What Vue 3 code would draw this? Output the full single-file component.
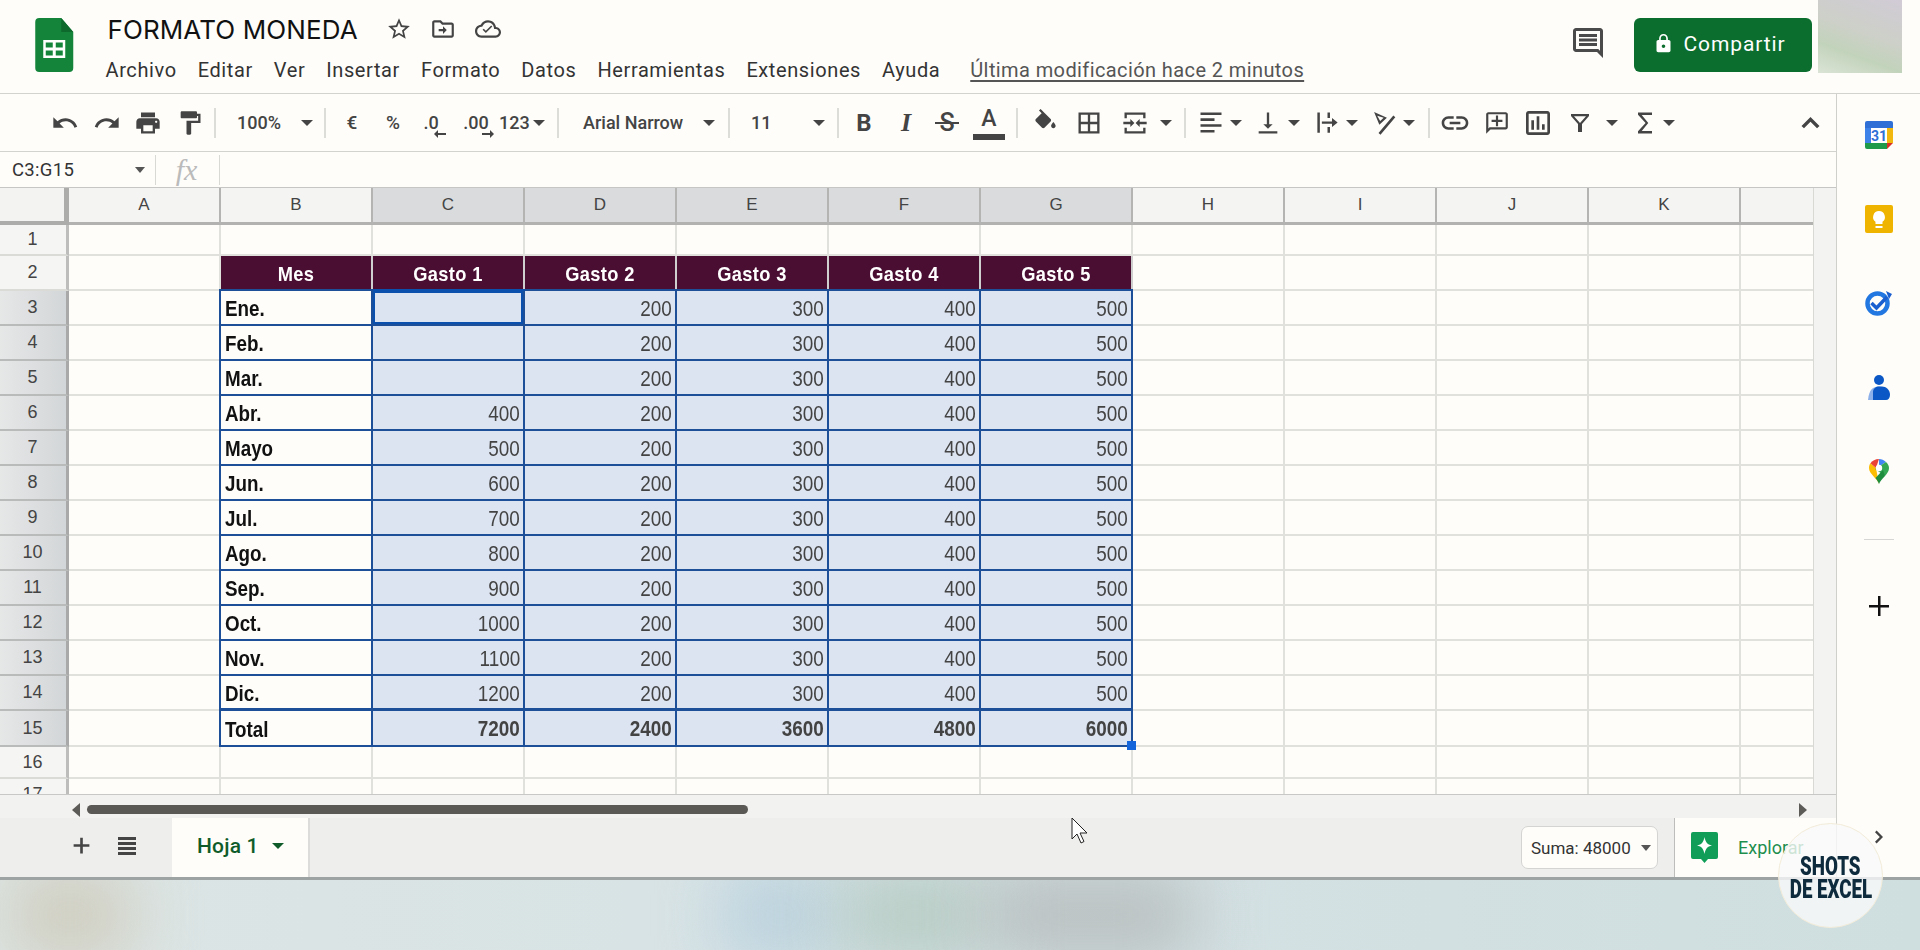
<script setup>
const P = {
  undo: 'M12.5 8c-2.65 0-5.05.99-6.9 2.6L2 7v9h9l-3.62-3.62c1.39-1.16 3.16-1.88 5.12-1.88 3.54 0 6.55 2.31 7.6 5.5l2.37-.78C21.08 11.03 17.15 8 12.5 8z',
  redo: 'M18.4 10.6C16.55 8.99 14.15 8 11.5 8c-4.65 0-8.58 3.03-9.96 7.22L3.9 16c1.05-3.19 4.05-5.5 7.6-5.5 1.95 0 3.73.72 5.12 1.88L13 16h9V7l-3.6 3.6z',
  print: 'M19 8H5c-1.66 0-3 1.34-3 3v6h4v4h12v-4h4v-6c0-1.66-1.34-3-3-3zm-3 11H8v-5h8v5zm3-7c-.55 0-1-.45-1-1s.45-1 1-1 1 .45 1 1-.45 1-1 1zm-1-9H6v4h12V3z',
  paint: 'M18 4V3c0-.55-.45-1-1-1H5c-.55 0-1 .45-1 1v4c0 .55.45 1 1 1h12c.55 0 1-.45 1-1V6h1v4H9v11c0 .55.45 1 1 1h2c.55 0 1-.45 1-1v-9h8V4h-3z',
  fill: 'M16.56 8.94L7.62 0 6.21 1.41l2.38 2.38-5.15 5.15c-.59.59-.59 1.54 0 2.12l5.5 5.5c.29.29.68.44 1.06.44s.77-.15 1.06-.44l5.5-5.5c.59-.58.59-1.53 0-2.12zM19 11.5s-2 2.17-2 3.5c0 1.1.9 2 2 2s2-.9 2-2c0-1.33-2-3.5-2-3.5z',
  borders: 'M3 3v18h18V3H3zm8 16H5v-6h6v6zm0-8H5V5h6v6zm8 8h-6v-6h6v6zm0-8h-6V5h6v6z',
  merge: 'M3 3h18v5h-2V5H5v3H3zM3 16h2v3h14v-3h2v5H3zM2 11h6V8.5l3.5 3.5L8 15.500V13H2zM22 13h-6v2.500L12.500 12 16 8.500V11h6z',
  align: 'M3 3h18v2.200H3zM3 8h12v2.200H3zM3 13h18v2.200H3zM3 18h12v2.200H3z',
  valign: 'M16 13h-3V3h-2v10H8l4 4 4-4zM4 19v2h16v-2H4z',
  wrap: 'M3 3h2.200v18H3zM12 3h2.200v5H12zM12 16h2.200v5H12zM7 11h9V8l5 4-5 4v-3H7z',
  rotate: 'M3.500 2.500l11 5-6.500 6zM6.200 5.800l2.500 4.400 3-2.800zM20 5.500l1.700 1.500L9 22l-1.700-1.500z',
  link: 'M3.900 12c0-1.710 1.390-3.100 3.100-3.100h4V7H7c-2.760 0-5 2.240-5 5s2.240 5 5 5h4v-1.900H7c-1.710 0-3.100-1.390-3.100-3.100zM8 13h8v-2H8v2zm9-6h-4v1.900h4c1.710 0 3.100 1.390 3.100 3.100s-1.390 3.100-3.100 3.100h-4V17h4c2.760 0 5-2.240 5-5s-2.240-5-5-5z',
  comment: 'M20 2H4c-1.100 0-2 .9-2 2v18l4-4h14c1.100 0 2-.9 2-2V4c0-1.100-.9-2-2-2zm0 14H5.170L4 17.170V4h16v12zM13 5h-2v4H7v2h4v4h2v-4h4V9h-4z',
  chart: 'M9 17H7v-7h2v7zm4 0h-2V7h2v10zm4 0h-2v-4h2v4zm2 2H5V5h14v14zm0-16H5c-1.100 0-2 .9-2 2v14c0 1.100.9 2 2 2h14c1.100 0 2-.9 2-2V5c0-1.100-.9-2-2-2z',
  filter: 'M3 3h18v2l-7 8v8h-4v-8L3 5zM6 5.200h12l-6 6.800z',
  sigma: 'M18 3H6v2l6.500 7L6 19v2h12v-2.200H9.200l5.600-6.800-5.600-6.800H18z',
  up: 'M12 7l-8 8 2.200 2.200L12 11.400l5.800 5.800L20 15z'
}
const tool = (kind, x, w, extra = {}) => ({ kind, x, w, ...extra })
const icon = (name, cx, size = 28) => tool('icon', cx - size / 2, size, { d: P[name], size })
const caret = (cx) => tool('caret', cx - 6, 12)
const sep = (cx) => tool('sep', cx - 1, 2)
const text = (label, x, w, cls = '') => tool('text', x, w, { label, cls })

const raw = [
  icon('undo', 65), icon('redo', 107), icon('print', 148), icon('paint', 190), sep(215),
  text('100%', 237, 46), caret(307), sep(325),
  text('€', 342, 20, 'c'), text('%', 383, 20, 'c'),
  tool('dec', 420, 22, { label: '.0', dir: 'l' }), tool('dec', 461, 30, { label: '.00', dir: 'r' }),
  text('123', 499, 33), caret(539), sep(558),
  text('Arial Narrow', 583, 104), caret(709), sep(729),
  text('11', 751, 22), caret(819), sep(838),
  tool('letter', 854, 20, { label: 'B', cls: 'b' }),
  tool('letter', 896, 20, { label: 'I', cls: 'i' }),
  tool('letter', 935, 24, { label: 'S', cls: 's' }),
  tool('color', 973, 32), sep(1017),
  icon('fill', 1045, 27), icon('borders', 1089, 28), icon('merge', 1135, 28), caret(1166), sep(1185),
  icon('align', 1211, 28), caret(1236), icon('valign', 1268, 28), caret(1294),
  icon('wrap', 1327, 27), caret(1352), icon('rotate', 1384, 28), caret(1409), sep(1429),
  icon('link', 1455, 32), icon('comment', 1497, 26), icon('chart', 1538, 32),
  icon('filter', 1580, 24), caret(1612), icon('sigma', 1645, 28), caret(1669), icon('up', 1810, 27)
]
let end = 0
const tools = raw.map((t) => {
  const m = t.x - end
  end = t.x + t.w
  return { ...t, style: { marginLeft: m + 'px', width: t.w + 'px' } }
})

const menu = ['Archivo', 'Editar', 'Ver', 'Insertar', 'Formato', 'Datos', 'Herramientas', 'Extensiones', 'Ayuda']
const cols = ['A', 'B', 'C', 'D', 'E', 'F', 'G', 'H', 'I', 'J', 'K', '']
const months = ['Ene.', 'Feb.', 'Mar.', 'Abr.', 'Mayo', 'Jun.', 'Jul.', 'Ago.', 'Sep.', 'Oct.', 'Nov.', 'Dic.']
const gasto1 = ['', '', '', 400, 500, 600, 700, 800, 900, 1000, 1100, 1200]
const heads = ['Mes', 'Gasto 1', 'Gasto 2', 'Gasto 3', 'Gasto 4', 'Gasto 5']

const blank = () => Array(12).fill(null).map(() => ({ t: '', c: '' }))
const rows = []
for (let n = 1; n <= 17; n++) {
  const cells = blank()
  let h = 35
  if (n === 1) h = 31
  if (n === 15) h = 36
  if (n === 16) h = 32
  if (n === 17) h = 15
  if (n === 2) heads.forEach((t, i) => { cells[i + 1] = { t, c: 'hd' } })
  if (n >= 3 && n <= 14) {
    const i = n - 3
    cells[1] = { t: months[i], c: 'box month' }
    const vals = [gasto1[i], 200, 300, 400, 500]
    vals.forEach((t, k) => { cells[k + 2] = { t, c: 'box sel num' } })
  }
  if (n === 15) {
    cells[1] = { t: 'Total', c: 'box month tot' }
    ;[7200, 2400, 3600, 4800, 6000].forEach((t, k) => { cells[k + 2] = { t, c: 'box sel num tot' } })
  }
  if (n === 3) cells[2].c += ' active'
  if (n === 15) cells[6].c += ' handle'
  rows.push({ n, h, cells, on: n >= 3 && n <= 15 })
}
</script>

<template>
  <div class="page">
    <header class="top">
      <svg class="logo" viewBox="0 0 38 54">
        <path d="M4 0h22l12 14v36a4 4 0 0 1-4 4H4a4 4 0 0 1-4-4V4a4 4 0 0 1 4-4z" fill="#13843a" />
        <path d="M26 0l12 14H26z" fill="#0d6a2c" />
        <path d="M8 22h22v18H8zM10.500 24.500v5h7v-5zm10 0v5h7v-5zm-10 8v5h7v-5zm10 0v5h7v-5z" fill="#fff" fill-rule="evenodd" />
      </svg>
      <div class="doc">
        <div class="title-row">
          <span class="title">FORMATO MONEDA</span>
          <svg class="ti star" viewBox="0 0 24 24"><path d="M22 9.240l-7.190-.62L12 2 9.190 8.630 2 9.240l5.460 4.730L5.820 21 12 17.270 18.180 21l-1.630-7.030L22 9.240zM12 15.400l-3.760 2.270 1-4.280-3.320-2.880 4.380-.38L12 6.100l1.710 4.040 4.380.38-3.320 2.880 1 4.280L12 15.400z" /></svg>
          <svg class="ti folder" viewBox="0 0 24 24"><path d="M20 6h-8l-2-2H4c-1.100 0-2 .9-2 2v12c0 1.100.9 2 2 2h16c1.100 0 2-.9 2-2V8c0-1.100-.9-2-2-2zm0 12H4V6h5.170l2 2H20v10zM12 9.500V12H8v2h4v2.500l3.500-3.500z" /></svg>
          <svg class="ti cloud" viewBox="0 0 24 24"><path d="M19.350 10.040C18.670 6.590 15.640 4 12 4 9.110 4 6.600 5.640 5.350 8.040 2.340 8.360 0 10.910 0 14c0 3.310 2.690 6 6 6h13c2.760 0 5-2.240 5-5 0-2.640-2.050-4.780-4.650-4.960zM19 18H6c-2.210 0-4-1.790-4-4 0-2.050 1.530-3.760 3.560-3.970l1.070-.11.5-.95C8.080 7.140 9.940 6 12 6c2.620 0 4.880 1.860 5.390 4.430l.3 1.500 1.530.11c1.560.1 2.780 1.410 2.780 2.960 0 1.650-1.350 3-3 3zm-9-2.200l-3-3 1.100-1.100 1.900 1.900 4.900-4.900 1.100 1.100z" /></svg>
        </div>
        <nav class="menu">
          <span v-for="m in menu" :key="m">{{ m }}</span>
          <a class="modified">Última modificación hace 2 minutos</a>
        </nav>
      </div>
      <svg class="chat" viewBox="0 0 24 24"><path d="M20 2H4c-1.100 0-2 .9-2 2v12c0 1.100.9 2 2 2h14l4 4V4c0-1.100-.9-2-2-2zm0 15.170L18.830 16H4V4h16v13.170zM6 12h12v2H6zm0-3h12v2H6zm0-3h12v2H6z" /></svg>
      <button class="share">
        <svg viewBox="0 0 24 24"><path d="M18 8h-1V6c0-2.760-2.240-5-5-5S7 3.240 7 6v2H6c-1.100 0-2 .9-2 2v10c0 1.100.9 2 2 2h12c1.100 0 2-.9 2-2V10c0-1.100-.9-2-2-2zm-6 9c-1.100 0-2-.9-2-2s.9-2 2-2 2 .9 2 2-.9 2-2 2zm3.100-9H8.900V6c0-1.710 1.390-3.100 3.100-3.100 1.710 0 3.100 1.390 3.100 3.100v2z" /></svg>
        Compartir
      </button>
      <div class="avatar"></div>
    </header>

    <div class="work">
      <section class="sheet">
        <div class="toolbar">
          <span v-for="(t, i) in tools" :key="i" class="tool" :class="t.kind" :style="t.style">
            <svg v-if="t.kind === 'icon'" :width="t.size" :height="t.size" viewBox="0 0 24 24"><path :d="t.d" fill-rule="evenodd" /></svg>
            <span v-else-if="t.kind === 'text'" :class="t.cls">{{ t.label }}</span>
            <span v-else-if="t.kind === 'letter'" :class="t.cls">{{ t.label }}</span>
            <span v-else-if="t.kind === 'color'" class="color-a">A</span>
            <template v-else-if="t.kind === 'dec'">
              {{ t.label }}
              <svg class="dec-arrow" :class="t.dir" viewBox="0 0 12 8"><path d="M0 3h8V0l4 4-4 4V5H0z" /></svg>
            </template>
          </span>
        </div>

        <div class="formula">
          <span class="ref">C3:G15</span>
          <i class="mini-caret"></i>
          <b class="fsep"></b>
          <span class="fx">fx</span>
          <b class="fsep"></b>
        </div>

        <div class="grid-wrap">
          <div class="grid">
            <div class="line header-line">
              <div class="rh corner"></div>
              <div v-for="(c, i) in cols" :key="i" class="ch" :class="{ on: i >= 2 && i <= 6 }">{{ c }}</div>
            </div>
            <div v-for="r in rows" :key="r.n" class="line" :class="{ 'r15': r.n === 15, 'r3': r.n === 3, 'r17': r.n === 17 }" :style="{ height: r.h + 'px' }">
              <div class="rh" :class="{ on: r.on }">{{ r.n }}</div>
              <div v-for="(c, i) in r.cells" :key="i" class="cell" :class="c.c"><span v-if="c.t !== ''" class="tx">{{ c.t }}</span></div>
            </div>
          </div>
          <div class="vtrack"></div>
        </div>

        <div class="hscroll">
          <div class="hs-left">
            <svg class="arrow" viewBox="0 0 8 14"><path d="M8 0v14L0 7z" /></svg>
            <div class="thumb"></div>
          </div>
          <svg class="arrow right" viewBox="0 0 8 14"><path d="M0 0v14l8-7z" /></svg>
          <div class="hs-end"></div>
        </div>

        <div class="tabs">
          <svg class="plus" viewBox="0 0 24 24"><path d="M10.500 3h3v7.500H21v3h-7.500V21h-3v-7.500H3v-3h7.500z" /></svg>
          <svg class="list" viewBox="0 0 24 24"><path d="M3 3h18v3H3zM3 8h18v3H3zM3 13h18v3H3zM3 18h18v3H3z" /></svg>
          <div class="tab">Hoja 1<i class="tab-caret"></i></div>
          <div class="suma">Suma: 48000<i class="mini-caret"></i></div>
          <div class="explore">
            <svg viewBox="0 0 27 31"><path d="M2 0h23a2 2 0 0 1 2 2v23a2 2 0 0 1-2 2h-8l-3.500 4-3.500-4H2a2 2 0 0 1-2-2V2a2 2 0 0 1 2-2z" fill="#0f9d58" /><path d="M13.500 5c1 5 2.500 7.500 7.500 8.500-5 1-6.500 3.500-7.500 8.500-1-5-2.500-7.500-7.500-8.500 5-1 6.500-3.500 7.500-8.500z" fill="#fff" /></svg>
            <span>Explorar</span>
          </div>
        </div>
      </section>

      <aside class="side">
        <div class="slot first">
          <svg width="28" height="28" viewBox="0 0 28 28">
            <path d="M2 0h24a2 2 0 0 1 2 2v5H0V2a2 2 0 0 1 2-2z" fill="#2f6fd6" />
            <path d="M0 7h6v15H0z" fill="#3d82e8" /><path d="M22 7h6v15h-6z" fill="#f2b80f" />
            <path d="M0 22h22v6H2a2 2 0 0 1-2-2z" fill="#1e9a4a" /><path d="M22 22h6l-6 6z" fill="#d93025" />
            <path d="M6 7h16v15H6z" fill="#fff" />
            <text x="14" y="20" text-anchor="middle" class="cal">31</text>
          </svg>
        </div>
        <div class="slot">
          <svg width="28" height="28" viewBox="0 0 28 28">
            <rect width="28" height="28" rx="2" fill="#efb400" />
            <path d="M14 6a6 6 0 0 1 3.500 10.800V19h-7v-2.200A6 6 0 0 1 14 6z" fill="#fff" /><path d="M10.500 21h7v2h-7z" fill="#fff" />
          </svg>
        </div>
        <div class="slot">
          <svg width="28" height="26" viewBox="0 0 28 26">
            <circle cx="12.500" cy="13.500" r="10" fill="none" stroke="#2277e0" stroke-width="4.500" />
            <path d="M6.500 13l5 5L22 7" fill="none" stroke="#1a5fd0" stroke-width="3.500" />
            <path d="M21 1l6 3-3 5z" fill="#1a5fd0" />
          </svg>
        </div>
        <div class="slot">
          <svg width="22" height="25" viewBox="0 0 22 25">
            <circle cx="11" cy="5" r="5" fill="#0b57c5" />
            <path d="M11 11.500c-6 0-10 3-11 13.500h14V12z" fill="#8cb0ea" />
            <path d="M5 25v-8c0-3.500 3-5.500 6-5.500h3c4 0 8 3 8 8.500 0 3-2 5-4 5z" fill="#0b57c5" />
          </svg>
        </div>
        <div class="slot">
          <svg width="20" height="25" viewBox="0 0 20 25">
            <path d="M10 25C8 19 0 15 0 9c0-1.800.5-3.400 1.400-4.700L7 9z" fill="#fbbc04" />
            <path d="M1.400 4.300C3.200 1.700 6.400 0 10 0l-3 9z" fill="#ea4335" />
            <path d="M10 0c2.500 0 5 1 7 3L7 9.500C7 8 8 6.500 10 6.500z" fill="#4285f4" />
            <path d="M17 3c2 2 3 4 3 6 0 3-1.600 5.300-4 8L6 10z" fill="#34a853" />
            <path d="M16 17c-2.500 2.800-5 5-6 8-.7-2.200-2-4-3.500-6L14 11z" fill="#1e8e3e" />
            <circle cx="10" cy="9" r="3.200" fill="#fff" />
          </svg>
        </div>
        <div class="side-line"></div>
        <svg class="side-plus" viewBox="0 0 20 20"><path d="M9 0h2.500v9H20v2.500h-8.500V20H9v-8.500H0V9h9z" /></svg>
        <svg class="side-chev" viewBox="0 0 10 16"><path d="M2 0l8 8-8 8-2-2 6-6-6-6z" /></svg>
      </aside>
    </div>

    <footer class="strip">
      <i class="blob b1"></i><i class="blob b2"></i><i class="blob b3"></i><i class="blob b4"></i>
    </footer>

    <svg class="pointer" viewBox="0 0 18 27"><path d="M1 1v21l5-5 4 9 3-1.500-4-8.500h7z" fill="#fff" stroke="#222" stroke-width="1" /></svg>
    <div class="badge"><span>SHOTS</span><span>DE EXCEL</span></div>
  </div>
</template>

<style>
html, body { margin: 0; background: #fefdfa; }
</style>

<style scoped>
.page { position: relative; width: 1920px; height: 950px; overflow: hidden; display: flex; flex-direction: column; background: #fefdfa; font-family: Roboto, sans-serif; color: #444; }

.top { height: 93px; flex: none; display: flex; align-items: flex-start; border-bottom: 1px solid #d2d2ce; box-sizing: content-box; }
.logo { width: 38.500px; height: 54px; margin: 18px 0 0 35px; flex: none; }
.doc { margin-left: 34px; width: 1462.500px; flex: none; }
.title-row { display: flex; align-items: center; height: 30px; margin-top: 14px; }
.title { font: 400 26px Inter, Roboto, sans-serif; color: #111; width: 278px; letter-spacing: 0.1px; white-space: nowrap; }
.ti { fill: #444; flex: none; }
.star { width: 26px; height: 26px; }
.folder { width: 26px; height: 26px; margin-left: 18px; }
.cloud { width: 26px; height: 26px; margin-left: 19px; }
.menu { display: flex; gap: 21px; align-items: center; height: 26px; margin-top: 13px; font-size: 20px; letter-spacing: 0.6px; color: #333; margin-left: -2px; white-space: nowrap; }
.modified { margin-left: 9px; color: #555; letter-spacing: 0.4px; text-decoration: underline; text-underline-offset: 3px; }
.chat { width: 36px; height: 36px; fill: #4a4a4a; margin: 25px 0 0 0; flex: none; }
.share { width: 178px; height: 54px; margin: 18px 0 0 28px; flex: none; background: #0b6e2e; color: #fff; border: 0; border-radius: 6px; font: 400 21px Roboto, sans-serif; letter-spacing: 0.9px; display: flex; align-items: center; justify-content: center; gap: 9px; padding: 0 7px 3px 0; }
.share svg { width: 21px; height: 21px; fill: #fff; }
.avatar { width: 84px; height: 73px; margin-left: 6px; flex: none; background: linear-gradient(200deg, #d1cbd6 0%, #cdd0c8 45%, #c2d3bb 70%, #dbe4d6 100%); }

.work { flex: none; height: 786px; display: flex; border-bottom: 3px solid #9da2a3; box-sizing: border-box; }
.sheet { width: 1837px; flex: none; border-right: 1px solid #cfcfcb; box-sizing: border-box; display: flex; flex-direction: column; }

.toolbar { height: 57px; flex: none; border-bottom: 1px solid #d2d2ce; display: flex; align-items: center; font-size: 18px; font-weight: 500; color: #444; box-sizing: content-box; }
.tool { display: inline-flex; align-items: center; justify-content: center; flex: none; position: relative; white-space: nowrap; }
.tool.text { justify-content: flex-start; }
.tool .c { width: 100%; text-align: center; font-size: 19px; }
.tool svg { fill: #444; }
.tool.caret { height: 6px; width: 12px; }
.tool.caret::before { content: ''; border: 6px solid transparent; border-top: 6px solid #444; border-bottom: 0; }
.tool.sep { height: 30px; background: #dcdcd8; }
.tool.dec { height: 34px; font-size: 18px; }
.dec-arrow { position: absolute; width: 12px; height: 8px; bottom: 2px; }
.dec-arrow.l { right: -4px; transform: scaleX(-1); }
.dec-arrow.r { right: -3px; }
.b { font-size: 24px; font-weight: 700; }
.i { font: italic 700 26px "Liberation Serif", serif; }
.s { font-size: 25px; font-weight: 500; position: relative; }
.s::after { content: ''; position: absolute; left: -4px; right: -4px; top: 14px; height: 2px; background: #444; }
.tool.color { height: 29px; align-items: flex-start; border-bottom: 6px solid #444; box-sizing: content-box; }
.color-a { font-size: 23px; line-height: 28px; }

.formula { height: 35px; flex: none; border-bottom: 1px solid #c6c6c4; display: flex; align-items: center; box-sizing: content-box; }
.ref { font-size: 18.500px; letter-spacing: 0.3px; color: #333; margin-left: 12px; width: 123px; flex: none; }
.mini-caret { border: 5px solid transparent; border-top: 6px solid #555; border-bottom: 0; flex: none; }
.fsep { width: 1px; height: 30px; background: #d8d8d4; flex: none; margin-left: 10px; }
.fx { font: italic 30px "Liberation Serif", serif; color: #bbb; width: 61px; text-align: center; flex: none; margin-right: -8px; }

.grid-wrap { height: 606px; flex: none; display: flex; overflow: hidden; }
.grid { width: 1813px; flex: none; }
.vtrack { flex: 1; background: #f3f3f1; border-left: 1px solid #d8d8d5; }
.line { display: flex; box-sizing: border-box; }
.header-line { height: 37px; }
.rh { width: 69px; flex: none; box-sizing: border-box; background: #f5f5f3; border-right: 3px solid #bdbdbb; border-bottom: 2px solid #dadad7; display: flex; align-items: center; justify-content: center; font: 18px "Liberation Sans", sans-serif; color: #444; padding-right: 1px; }
.rh.on { background: linear-gradient(90deg, #e6e7e7, #d3d6d8); border-right-color: #a9a9a9; border-bottom-color: #b9bbbb; }
.corner { background: #f3f3f2; border-right: 5px solid #acacaa; border-bottom: 4px solid #acacaa; }
.ch { width: 152px; flex: none; box-sizing: border-box; background: #f4f4f3; border-right: 2px solid #b4b4b2; border-bottom: 3px solid #b2b2b0; display: flex; align-items: center; justify-content: center; font: 17px "Liberation Sans", sans-serif; color: #444; }
.ch:last-child { width: 72px; border-right: 0; }
.ch.on { background: #d9dbdd; }
.cell { width: 152px; flex: none; box-sizing: border-box; border-right: 2px solid #e0e0dc; border-bottom: 2px solid #e0e0dc; position: relative; display: flex; align-items: center; font: 21.500px "Liberation Sans", sans-serif; overflow: visible; white-space: nowrap; }
.cell:last-child { width: 72px; border-right: 0; }
.tx { display: inline-block; }
.hd { background: #4b0e33; color: #fff; font-weight: 700; justify-content: center; font-size: 21px; letter-spacing: 0.4px; padding-top: 2px; border-right-color: #cfcfcf; }
.hd .tx { transform: scaleX(0.87); }
.box { border-right: 2px solid #1d4f98; border-bottom: 2px solid #1d4f98; }
.sel { background: #dde4f1; }
.num { justify-content: flex-end; padding-right: 3px; color: #434343; padding-top: 3px; }
.num .tx { transform: scaleX(0.88); transform-origin: right center; }
.month { color: #111; font-weight: 700; padding-left: 4px; padding-top: 4px; border-left: 2px solid #1d4f98; margin-left: -2px; width: 154px; }
.month .tx { transform: scaleX(0.875); transform-origin: left center; }
.tot { font-weight: 700; }
.r3 .box { box-shadow: 0 -2px 0 #1d4f98; }
.r15 .box { box-shadow: 0 -3px 0 #1d4f98; }
.active { box-shadow: inset 0 0 0 2px #0b50ad, 0 -2px 0 #0b50ad !important; }
.handle::after { content: ''; position: absolute; right: -5px; bottom: -5px; width: 9px; height: 9px; background: #1464dc; z-index: 2; }
.r17 .rh { align-items: flex-start; padding-top: 5px; overflow: hidden; border-bottom: 0; }
.r17 .cell { border-bottom: 0; }

.hscroll { height: 24px; flex: none; background: #f2f2f0; border-top: 1px solid #c8c8c6; box-sizing: border-box; display: flex; align-items: center; padding-top: 6px; }
.hs-left { width: 1799px; flex: none; display: flex; align-items: center; }
.arrow { width: 8px; height: 14px; fill: #5d5b57; flex: none; }
.hs-left .arrow { margin-left: 72px; }
.thumb { width: 661px; height: 9px; margin-left: 7px; border-radius: 5px; background: #5b5955; }
.hs-end { flex: 1; }
.arrow.right { flex: none; }

.tabs { height: 59px; flex: none; background: #eeeeed; display: flex; align-items: center; overflow: visible; position: relative; }
.plus { width: 21px; height: 21px; fill: #444; margin: 0 0 4px 71px; flex: none; }
.list { width: 24px; height: 24px; fill: #444; margin: 0 0 4px 23px; flex: none; }
.tab { margin-left: 33px; width: 138px; height: 59px; box-sizing: border-box; flex: none; background: #fefdfa; border-right: 2px solid #dcdcda; display: flex; align-items: center; padding: 0 0 4px 25px; font-size: 21px; font-weight: 500; letter-spacing: 0.2px; color: #0f5c2a; gap: 13px; }
.tab-caret { border: 6px solid transparent; border-top: 6px solid #0f5c2a; border-bottom: 0; }
.suma { margin-left: 1211px; width: 137px; height: 43px; flex: none; box-sizing: border-box; background: #fefdfa; border: 1px solid #d4d4d2; border-radius: 7px; display: flex; align-items: center; padding-left: 9px; gap: 10px; font-size: 17px; color: #333; }
.explore { margin-left: 16px; width: 162px; height: 59px; flex: none; box-sizing: border-box; background: #fefdfa; border-left: 1px solid #bdbdbb; display: flex; align-items: center; padding-left: 16px; gap: 20px; font-size: 18px; color: #1e8e4e; }
.explore svg { width: 27px; height: 31px; flex: none; }

.side { flex: 1; display: flex; flex-direction: column; align-items: center; }
.slot { height: 84px; flex: none; display: flex; align-items: center; justify-content: center; }
.slot.first { margin-top: -1px; }
.cal { font: 700 14px Roboto, sans-serif; fill: #2f6fd6; }
.side-line { width: 30px; height: 1px; background: #d6d6d4; margin-top: 26px; flex: none; }
.side-plus { width: 20px; height: 20px; margin-top: 56px; fill: #111; flex: none; }
.side-chev { width: 8px; height: 14px; fill: #444; margin-top: 214px; flex: none; }

.strip { flex: 1; position: relative; overflow: hidden; background: linear-gradient(90deg, #dde5e4, #d5e2e5 50%, #cfdedf); }
.blob { position: absolute; top: -10px; height: 90px; filter: blur(34px); opacity: 0.85; }
.b1 { left: 10px; width: 120px; background: #cdc9b8; }
.b2 { left: 725px; width: 110px; background: #b5cedd; }
.b3 { left: 840px; width: 150px; background: #b3c9bf; }
.b4 { left: 985px; width: 210px; background: #b5baba; }

.pointer { position: absolute; left: 1071px; top: 817px; width: 18px; height: 27px; }
.badge { position: absolute; left: 1778px; top: 823px; width: 105px; height: 105px; box-sizing: border-box; border-radius: 50%; background: rgba(247, 249, 249, 0.8); border: 1px solid #f3ecd9; display: flex; flex-direction: column; align-items: center; justify-content: center; padding-top: 4px; font: 900 25px/23px Roboto, sans-serif; color: #0e2a3d; }
.badge span { display: block; white-space: nowrap; transform: scaleX(0.75); }
</style>
